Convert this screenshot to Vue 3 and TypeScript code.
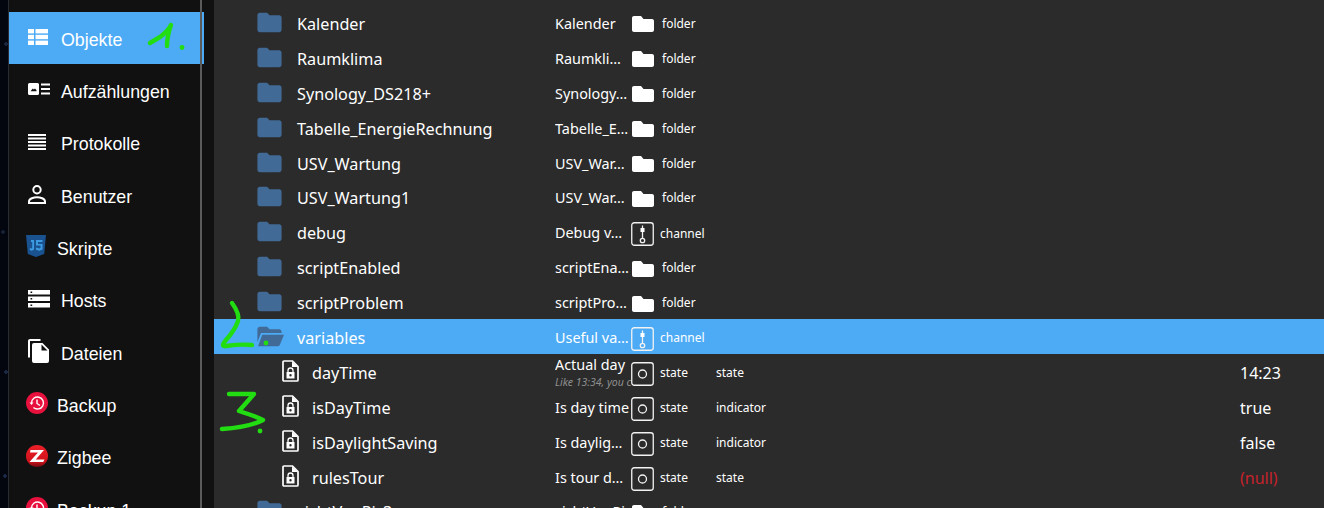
<script setup lang="ts">
interface NavItem { label: string; icon: string; active?: boolean; shift?: boolean }
interface Row {
  name: string; desc: string; sub?: string; type: string; role?: string; value?: string;
  kind: 'folder' | 'open' | 'file'; typeIcon: 'folder' | 'channel' | 'state'; selected?: boolean; nullValue?: boolean
}

const nav: NavItem[] = [
  { label: 'Objekte', icon: 'objects', active: true },
  { label: 'Aufzählungen', icon: 'enums' },
  { label: 'Protokolle', icon: 'logs' },
  { label: 'Benutzer', icon: 'user' },
  { label: 'Skripte', icon: 'js', shift: true },
  { label: 'Hosts', icon: 'hosts' },
  { label: 'Dateien', icon: 'files' },
  { label: 'Backup', icon: 'backup', shift: true },
  { label: 'Zigbee', icon: 'zigbee', shift: true },
  { label: 'Backup 1', icon: 'backup', shift: true }
]

const folder = (name: string, desc: string): Row => ({ name, desc, type: 'folder', kind: 'folder', typeIcon: 'folder' })
const state = (name: string, desc: string, role: string, value: string, extra: Partial<Row> = {}): Row => ({
  name, desc, type: 'state', role, value, kind: 'file', typeIcon: 'state', ...extra
})

const rows: Row[] = [
  folder('Kalender', 'Kalender'),
  folder('Raumklima', 'Raumkli…'),
  folder('Synology_DS218+', 'Synology…'),
  folder('Tabelle_EnergieRechnung', 'Tabelle_E…'),
  folder('USV_Wartung', 'USV_War…'),
  folder('USV_Wartung1', 'USV_War…'),
  { name: 'debug', desc: 'Debug v…', type: 'channel', kind: 'folder', typeIcon: 'channel' },
  folder('scriptEnabled', 'scriptEna…'),
  folder('scriptProblem', 'scriptPro…'),
  { name: 'variables', desc: 'Useful va…', type: 'channel', kind: 'open', typeIcon: 'channel', selected: true },
  state('dayTime', 'Actual day', 'state', '14:23', { sub: 'Like 13:34, you can use it in scripts' }),
  state('isDayTime', 'Is day time', 'indicator', 'true'),
  state('isDaylightSaving', 'Is daylig…', 'indicator', 'false'),
  state('rulesTour', 'Is tour d…', 'state', '(null)', { nullValue: true }),
  folder('sichtVonPi_3', 'sichtVonPi…')
]
</script>

<template>
  <div class="page">
    <div class="backdrop"></div>

    <aside class="sidebar">
      <div v-for="item in nav" :key="item.label" class="nav-item" :class="{ active: item.active, shifted: item.shift }">
        <span class="nav-icon">
          <svg v-if="item.icon === 'objects'" width="20" height="16" viewBox="0 0 20 16" fill="#fff">
            <rect x="0" y="0" width="6" height="4.400" /><rect x="7.500" y="0" width="12.500" height="4.400" />
            <rect x="0" y="5.800" width="6" height="4.400" /><rect x="7.500" y="5.800" width="12.500" height="4.400" />
            <rect x="0" y="11.600" width="6" height="4.400" /><rect x="7.500" y="11.600" width="12.500" height="4.400" />
          </svg>
          <svg v-else-if="item.icon === 'enums'" width="22" height="12" viewBox="0 0 22 12" fill="#fff">
            <path fill-rule="evenodd" d="M1.500 0h8A1.500 1.500 0 0 1 11 1.500v9A1.500 1.500 0 0 1 9.500 12h-8A1.500 1.500 0 0 1 0 10.500v-9A1.500 1.500 0 0 1 1.500 0zM2.500 8.200h6V7.200L7 5.400 5.800 6.600 4.800 5.400z" />
            <rect x="13" y="0.500" width="9" height="2" /><rect x="13" y="5" width="9" height="2" /><rect x="13" y="9.500" width="9" height="2" />
          </svg>
          <svg v-else-if="item.icon === 'logs'" width="18" height="16" viewBox="0 0 18 16" fill="#fff">
            <rect y="0" width="18" height="2" /><rect y="3.500" width="18" height="2" /><rect y="7" width="18" height="2" />
            <rect y="10.500" width="18" height="2" /><rect y="14" width="18" height="2" />
          </svg>
          <svg v-else-if="item.icon === 'user'" width="18" height="19" viewBox="0 0 18 19" fill="none" stroke="#fff" stroke-width="2">
            <circle cx="9" cy="4.800" r="3.700" />
            <path d="M1 18v-1.500c0-3 5-4.200 8-4.200s8 1.200 8 4.200V18z" />
          </svg>
          <svg v-else-if="item.icon === 'js'" width="20" height="22" viewBox="0 0 20 22">
            <path fill="#19528f" d="M0 0h20l-1.800 19L10 22 1.800 19z" />
            <path fill="#3d9ae0" d="M5 5h3v9.500L5.800 15.800 3.800 15v-2l2 .6.400-.4V7H5zM10 5h6.500v2H12v2h4.500v5.500l-3.300 1.300-3.200-1V12.500l3.200 1 1.300-.5v-2.500H10z" />
          </svg>
          <svg v-else-if="item.icon === 'hosts'" width="22" height="18" viewBox="0 0 22 18" fill="#fff">
            <path fill-rule="evenodd" d="M0 0h22v4.500H0zM2.500 1.400v1.700h1.700V1.400zM0 6.500h22V11H0zM2.500 7.900v1.700h1.700V7.900zM0 13h22v4.500H0zM2.500 14.400v1.700h1.700v-1.700z" />
          </svg>
          <svg v-else-if="item.icon === 'files'" width="21" height="24" viewBox="0 0 21 24" fill="#fff">
            <path d="M2 18.500H0V2C0 .9.900 0 2 0h10.500v2H2z" />
            <path d="M6 4h8.500L21 10.500V22a2 2 0 0 1-2 2H6a2 2 0 0 1-2-2V6a2 2 0 0 1 2-2zM13.500 5.500v6h6z" />
          </svg>
          <svg v-else-if="item.icon === 'backup'" width="22" height="22" viewBox="0 0 22 22">
            <circle cx="11" cy="11" r="11" fill="#e8103d" />
            <path fill="none" stroke="#fff" stroke-width="1.400" d="M5.500 11a6 6 0 1 1 2 4.500M11 7.500V11.500L14 13.500" />
            <path fill="#fff" d="M3.500 10.500h4L5.500 13z" />
          </svg>
          <svg v-else-if="item.icon === 'zigbee'" width="22" height="22" viewBox="0 0 22 22">
            <defs>
              <linearGradient id="zig" x1="0" y1="0" x2="0" y2="1">
                <stop offset="0" stop-color="#ec1f27" /><stop offset="0.750" stop-color="#d0121c" /><stop offset="1" stop-color="#6d0a10" />
              </linearGradient>
            </defs>
            <circle cx="11" cy="11" r="11" fill="url(#zig)" />
            <path fill="#fff" d="M4.500 5H18L9.800 14.500H18.500L17.200 17H3.500L12 7.500H4z" />
          </svg>
        </span>
        <span class="nav-label">{{ item.label }}</span>
      </div>
      <div class="divider"></div>
    </aside>

    <main class="table">
      <div v-for="row in rows" :key="row.name" class="row" :class="{ selected: row.selected }">
        <div class="name-cell" :class="row.kind">
          <svg v-if="row.kind === 'folder'" class="tree-icon" width="29" height="29" viewBox="0 0 24 24" fill="#426a97">
            <path d="M10 4H4c-1.100 0-2 .9-2 2v12c0 1.100.9 2 2 2h16c1.100 0 2-.9 2-2V8c0-1.100-.9-2-2-2h-8l-2-2z" />
          </svg>
          <svg v-else-if="row.kind === 'open'" class="tree-icon" width="29" height="29" viewBox="0 0 24 24" fill="#426a97">
            <path d="M10 4H4c-1.100 0-2 .9-2 2v10.500L5 9h17V8c0-1.100-.9-2-2-2h-8z" />
            <path d="M6 10.500h18L20.500 19c-.3.600-.8 1-1.500 1H2.500z" />
          </svg>
          <svg v-else class="tree-icon" width="17" height="22" viewBox="0 0 17 22">
            <path fill="none" stroke="#fff" stroke-width="1.700" d="M1 2a1 1 0 0 1 1-1h8.500L16 6.500V20a1 1 0 0 1-1 1H2a1 1 0 0 1-1-1z" />
            <path fill="#fff" d="M10 1.500V7h5.800z" />
            <path fill="none" stroke="#fff" stroke-width="1.300" d="M6 12V10.500a2.500 2.500 0 0 1 5 0V12" />
            <path fill="#fff" fill-rule="evenodd" d="M4.500 12h8v6.500h-8zM8.500 14a1.200 1.200 0 1 0 0 2.400 1.200 1.200 0 0 0 0-2.400z" />
          </svg>
          <span class="name">{{ row.name }}</span>
        </div>
        <div class="desc-cell">
          <div class="desc">{{ row.desc }}</div>
          <div v-if="row.sub" class="sub">{{ row.sub }}</div>
        </div>
        <div class="type-cell" :class="row.typeIcon">
          <svg v-if="row.typeIcon === 'folder'" width="22" height="16" viewBox="0 0 22 16" fill="#fff">
            <path d="M9 0H2C.9 0 0 .9 0 2v12c0 1.100.9 2 2 2h18c1.100 0 2-.9 2-2V5c0-1.100-.9-2-2-2H11.500z" />
          </svg>
          <svg v-else width="23" height="24" viewBox="0 0 23 24" fill="none" stroke="#f2f2f2">
            <rect x="0.750" y="0.750" width="21.500" height="22.500" rx="2.500" stroke-width="1.300" />
            <template v-if="row.typeIcon === 'channel'">
              <path d="M11.500 3.500V16" stroke-width="1.300" />
              <rect x="9.500" y="6" width="4" height="4" fill="#fff" stroke="none" />
              <circle cx="11.500" cy="18.500" r="2.200" stroke-width="1.300" />
            </template>
            <circle v-else cx="11.500" cy="12" r="4" stroke-width="1.300" />
          </svg>
          <span class="type-label">{{ row.type }}</span>
        </div>
        <div class="role-cell">{{ row.role }}</div>
        <div class="value-cell" :class="{ 'is-null': row.nullValue }">{{ row.value }}</div>
      </div>
    </main>

    <svg class="scribble" width="1324" height="508" viewBox="0 0 1324 508" fill="none" stroke="#22dd11" stroke-width="4.400" stroke-linecap="round" stroke-linejoin="round">
      <path d="M150 43 160 37Q168 31 171 25 167 36 167 46" />
      <circle cx="182" cy="47.500" r="2.400" fill="#22dd11" stroke="none" />
      <path d="M232 303Q240 314 238 321 235 330 226 340 220 347 226 346 240 344 252 345" />
      <circle cx="266" cy="343" r="2.400" fill="#22dd11" stroke="none" />
      <path d="M229 394 254 394 239 411 Q255 416 263 420 250 427 222 429" />
      <circle cx="260" cy="431" r="2.400" fill="#22dd11" stroke="none" />
    </svg>
  </div>
</template>

<style scoped>
.page {
  position: relative;
  display: flex;
  width: 1324px;
  height: 508px;
  overflow: hidden;
  background: #2b2b2b;
}

.backdrop {
  flex: 0 0 9px;
  box-sizing: border-box;
  border-right: 1px solid #2a2c33;
  background:
    radial-gradient(circle at 6px 44px, #1b2740 0 1.500px, transparent 2px),
    radial-gradient(circle at 3px 232px, #18233a 0 1.500px, transparent 2px),
    radial-gradient(circle at 6px 372px, #1a2a48 0 1.500px, transparent 2px),
    radial-gradient(circle at 5px 476px, #1a2a48 0 1.500px, transparent 2px),
    #03060f;
}

.sidebar {
  position: relative;
  flex: 0 0 205px;
  box-sizing: border-box;
  padding-top: 12px;
  background: #111;
  color: #fff;
  font-family: "Liberation Sans", Arial, sans-serif;
  font-size: 17.800px;
}

.nav-item {
  display: flex;
  align-items: center;
  width: 195px;
  height: 52.330px;
  box-sizing: border-box;
  padding-left: 19px;
}

.nav-item.active {
  background: #4dabf5;
}

.nav-icon {
  display: flex;
  flex: 0 0 33px;
  align-items: center;
  justify-content: flex-start;
  margin-bottom: 2px;
}

.nav-label {
  margin-top: 4px;
}

.nav-item.shifted {
  padding-left: 17px;
}

.nav-item.shifted .nav-icon {
  flex-basis: 31px;
}

.divider {
  position: absolute;
  top: 0;
  bottom: 0;
  left: 191px;
  width: 2px;
  background: #5a5a5a;
}

.table {
  flex: 1;
  min-width: 0;
  padding-top: 5px;
  color: #fff;
  font-family: "Noto Sans", sans-serif;
}

.row {
  display: flex;
  align-items: center;
  height: 34.900px;
}

.row.selected {
  background: #4dabf5;
}

.name-cell {
  display: flex;
  flex: 0 0 341px;
  align-items: center;
  box-sizing: border-box;
  padding-left: 41px;
  font-size: 16.200px;
}

.name-cell.file {
  padding-left: 68px;
}

.name {
  margin-top: 3px;
}

.tree-icon {
  flex: none;
  margin-right: 13px;
}

.desc-cell {
  flex: 0 0 76px;
  box-sizing: border-box;
  padding-top: 3px;
  overflow: hidden;
  white-space: nowrap;
  font-size: 14.400px;
}

.desc {
  line-height: 18px;
}

.sub {
  color: #8f8f8f;
  font-size: 10.500px;
  font-style: italic;
  line-height: 16px;
}

.type-cell {
  display: flex;
  flex: 0 0 85px;
  align-items: center;
  font-size: 12px;
}

.type-cell svg {
  flex: none;
  margin-top: 5px;
  margin-right: 6px;
}

.type-cell.folder svg {
  margin-top: 4px;
  margin-left: 1px;
  margin-right: 8px;
}

.type-label {
  margin-top: 2px;
}

.type-cell.channel .type-label {
  margin-top: 3px;
}

.type-cell.folder .type-label {
  margin-top: 2px;
}

.role-cell {
  flex: 0 0 524px;
  padding-top: 2px;
  font-size: 12px;
}

.value-cell {
  padding-top: 3px;
  font-size: 16px;
}

.value-cell.is-null {
  color: #c5222b;
}

.scribble {
  position: absolute;
  top: 0;
  left: 0;
  pointer-events: none;
}
</style>
